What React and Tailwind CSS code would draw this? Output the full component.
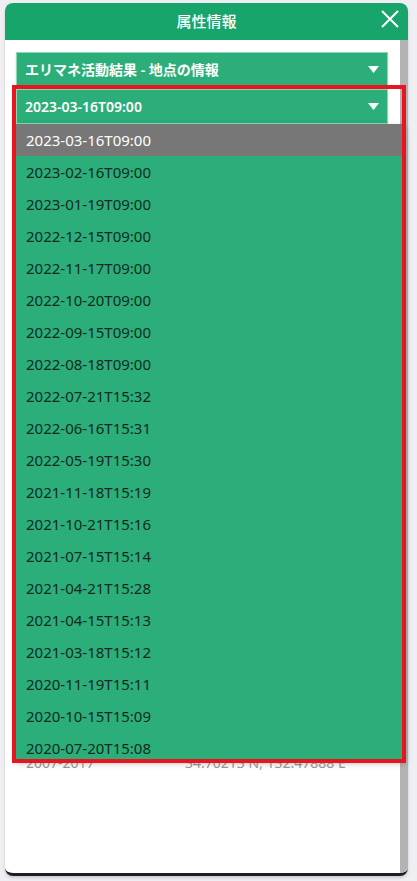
import React from 'react';

const dates = [
  '2023-03-16T09:00',
  '2023-02-16T09:00',
  '2023-01-19T09:00',
  '2022-12-15T09:00',
  '2022-11-17T09:00',
  '2022-10-20T09:00',
  '2022-09-15T09:00',
  '2022-08-18T09:00',
  '2022-07-21T15:32',
  '2022-06-16T15:31',
  '2022-05-19T15:30',
  '2021-11-18T15:19',
  '2021-10-21T15:16',
  '2021-07-15T15:14',
  '2021-04-21T15:28',
  '2021-04-15T15:13',
  '2021-03-18T15:12',
  '2020-11-19T15:11',
  '2020-10-15T15:09',
  '2020-07-20T15:08',
];

const font = { fontFamily: '"Noto Sans", "Noto Sans CJK JP", sans-serif' };

const Caret = () => (
  <svg width="11" height="7" viewBox="0 0 11 7" className="shrink-0">
    <path d="M0 0 L11 0 L5.5 7 Z" fill="#ffffff" />
  </svg>
);

const SelectBox = ({ label }) => (
  <div className="flex h-[35px] items-center justify-between border border-[#8fd7b4] bg-[#2bae7a] pl-[8px] pr-[8px] shadow-[0_1px_2px_rgba(0,0,0,0.15)]">
    <span className="text-[14px] font-semibold text-white">{label}</span>
    <Caret />
  </div>
);

export default function App() {
  return (
    <div className="relative min-h-[881px] w-[417px] bg-[#eeeef3] pt-[3px]" style={font}>
      {/* Panel */}
      <div className="ml-[5px] flex h-[873px] w-[403px] flex-col overflow-hidden rounded-t-[8px] rounded-b-[8px] border-b-[3px] border-[#1c1f24] bg-white shadow-[0_2px_3px_rgba(0,0,0,0.15)]">
        {/* Header */}
        <div className="relative flex h-[37px] shrink-0 items-center justify-center bg-[#17a56c]">
          <span className="text-[15px] font-medium text-white">属性情報</span>
          <svg width="18" height="18" viewBox="0 0 18 18" className="absolute right-[9px] top-[7px]">
            <path d="M1 1 L17 17 M17 1 L1 17" stroke="#ffffff" strokeWidth="2" />
          </svg>
        </div>

        {/* Body */}
        <div className="flex flex-1">
          <div className="flex-1 pl-[11px] pr-[12px] pt-[12px]">
            <SelectBox label="エリマネ活動結果 - 地点の情報" />
            <div className="mt-[2px]">
              <SelectBox label="2023-03-16T09:00" />
            </div>
            <div className="mt-[629px] flex text-[14px] leading-[20px] text-[#9a9a9a]">
              <span className="w-[169px] pl-[10px]">2007-2017</span>
              <span>34.70213 N, 132.47888 E</span>
            </div>
          </div>
          <div className="w-[8px] bg-[#b3b3b3]" />
        </div>
      </div>

      {/* Opened option list */}
      <div className="absolute left-[16px] top-[124px] h-[636px] w-[389px] overflow-hidden bg-[#2bae7a] shadow-[0_3px_6px_rgba(0,0,0,0.3)]">
        {dates.map((d, i) => (
          <div
            key={d}
            className={
              i === 0
                ? 'flex h-[32px] items-center bg-[#777777] pl-[10px] text-[15px] text-white'
                : 'flex h-[32px] items-center pl-[10px] text-[15px] text-[#142a1f]'
            }
          >
            {d}
          </div>
        ))}
      </div>

      {/* Highlight frame */}
      <div className="pointer-events-none absolute left-[12px] top-[85px] h-[678px] w-[394px] border-[4px] border-[#e8151f]" />
    </div>
  );
}
